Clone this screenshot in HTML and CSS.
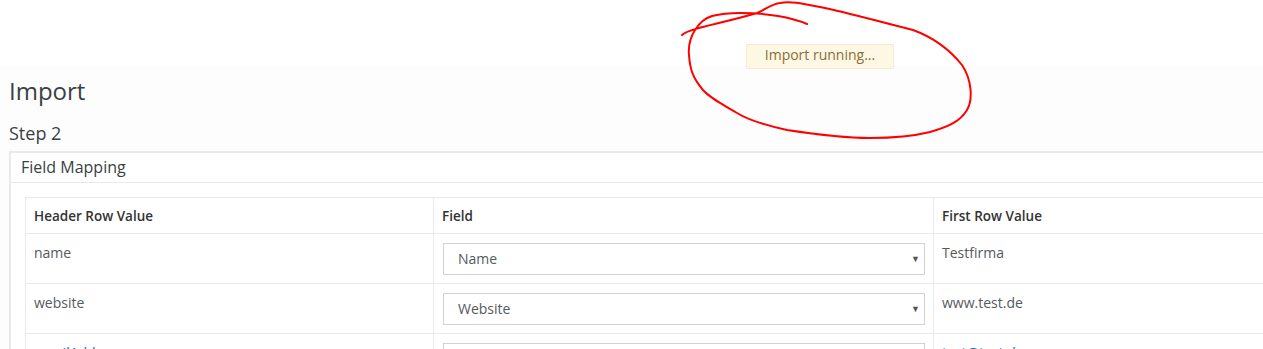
FILE: index.html
```html
<!DOCTYPE html>
<html lang="de">
<head>
  <meta charset="UTF-8">
  <title>Import</title>
  <link rel="stylesheet" href="styles.css">
</head>
<body>

  <!-- notifica import -->
  <div class="toast">Import running...</div>

  <!-- segno a mano -->
  <svg class="scribble" width="1263" height="349" viewBox="0 0 1263 349">
    <path d="M682,35 C690,28 720,24 757,13 C768,8 772,4 780,3 C790,1 800,3 820,7 C850,13 880,22 913,30 C935,38 950,50 962,65 C972,80 973,100 967,110 C960,122 947,127 930,132 C910,137 893,138 870,138 C847,138 820,135 787,130 C760,124 745,118 737,113 C720,103 710,98 703,90 C693,78 690,70 689,55 C688,45 690,38 695,30 C700,22 705,18 712,16 C720,14 726,13 740,13 C755,13 767,14 778,16 C790,18 800,21 807,24"/>
  </svg>

  <div class="page">
    <h2 class="title">Import</h2>
    <h3 class="step">Step 2</h3>

    <div class="panel">
      <div class="panel-heading">Field Mapping</div>
      <div class="panel-body">
        <table class="mapping">
          <thead>
            <tr>
              <th class="col-a">Header Row Value</th>
              <th class="col-b">Field</th>
              <th>First Row Value</th>
            </tr>
          </thead>
          <tbody>
            <tr>
              <td>name</td>
              <td><div class="select">Name<span class="caret">▼</span></div></td>
              <td>Testfirma</td>
            </tr>
            <tr>
              <td>website</td>
              <td><div class="select">Website<span class="caret">▼</span></div></td>
              <td>www.test.de</td>
            </tr>
            <tr>
              <td class="link">emailAddress</td>
              <td><div class="select">Email Address<span class="caret">▼</span></div></td>
              <td class="link">test@test.de</td>
            </tr>
          </tbody>
        </table>
      </div>
    </div>
  </div>

</body>
</html>
```

FILE: styles.css
```css
:root {
  --text:       #555a5e;
  --dark:       #333;
  --line:       #e7eaec;
  --page-bg:    #fdfdfd;
  --font:       'Open Sans', 'Noto Sans', Arial, sans-serif;
}
* { box-sizing:border-box; margin:0; padding:0 }
html, body { overflow:hidden; }
body {
  font-family:var(--font);
  font-size:14px;
  color:var(--text);
  background:#fff;
  padding-top:66px;
  width:1263px;
  height:349px;
  position:relative;
}

/* notifica */
.toast {
  position:absolute; left:746px; top:44px;
  width:148px; height:25px;
  background:#fcf8e3;
  border:1px solid #faebcc;
  color:#8a6d3b;
  font-size:14px;
  line-height:20px;
  text-align:center;
}

/* cerchio rosso */
.scribble {
  position:absolute; left:0; top:0;
  pointer-events:none;
}
.scribble path {
  fill:none; stroke:#f00; stroke-width:2;
  stroke-linecap:round;
}

.page {
  background:var(--page-bg);
  height:100%;
  padding-left:9px;
}
.title {
  font-size:24px; font-weight:400;
  color:#3a3f44;
  line-height:28px;
  padding-top:11px;
}
.step {
  font-size:18px; font-weight:400;
  color:#3a3f44;
  line-height:22px;
  margin-top:17px;
}

.panel {
  margin-top:7px;
  width:1300px;
  background:#fff;
  border:2px solid var(--line);
  border-right:none;
}
.panel-heading {
  font-size:16px;
  color:#3a3f44;
  padding:4px 10px;
  line-height:21px;
  border-bottom:1px solid var(--line);
}
.panel-body { padding:14px 0 0 14px; }

.mapping {
  width:100%;
  border-collapse:collapse;
  border:1px solid var(--line);
}
.mapping th, .mapping td {
  border:1px solid var(--line);
  text-align:left;
  vertical-align:top;
  padding:9px 8px 7px;
  line-height:20px;
}
.mapping th {
  font-weight:600;
  font-size:13.5px;
  color:var(--dark);
  height:36px;
  padding-top:8px;
}
.mapping td { height:50px; }
.col-a { width:408px; }
.col-b { width:500px; }
.mapping td .select { margin:0 0 0 1px; }
.select {
  height:32px;
  border:1px solid #cfd3d6;
  padding:0 14px;
  line-height:30px;
  font-size:14px;
  color:#555a5e;
  display:flex; justify-content:space-between;
}
.caret { font-size:9px; color:#555; margin-right:-10px; }
.link { color:#2a5db0; }
```
